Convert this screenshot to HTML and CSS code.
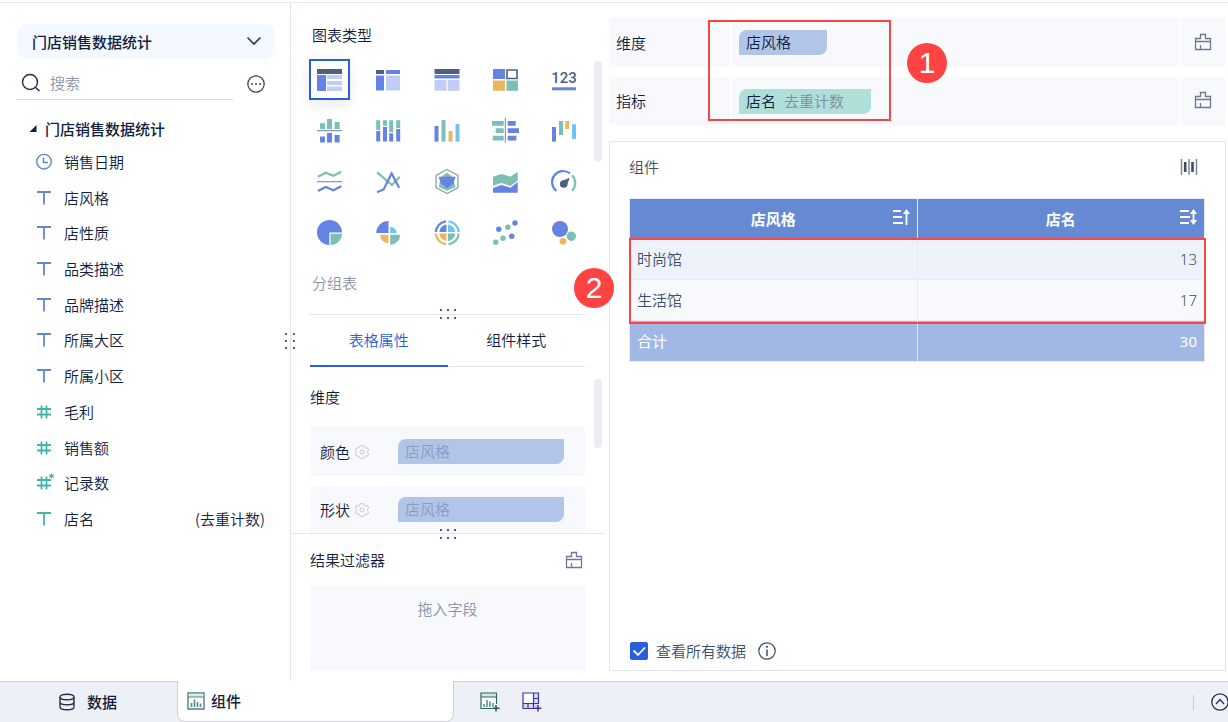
FILE: index.html
```html
<!DOCTYPE html>
<html lang="zh-CN">
<head>
    <meta charset="UTF-8">
    <meta name="viewport" content="width=device-width, initial-scale=1.0">
    <title>门店销售数据统计</title>
    <link rel="stylesheet" href="styles.css">
</head>
<body>
    <!-- shared icons -->
    <svg class="sprite" aria-hidden="true">
        <symbol id="i-text" viewBox="0 0 18 18"><path d="M2 3h14M9 3v12.500" fill="none" stroke="currentColor" stroke-width="1.800"/></symbol>
        <symbol id="i-num" viewBox="0 0 18 18"><path d="M2 6h14M2 11.500h14M6.500 2.500v13M11.500 2.500v13" fill="none" stroke="currentColor" stroke-width="1.800"/></symbol>
        <symbol id="i-clear" viewBox="0 0 18 18"><path d="M1.500 16.500v-11h5v-4h5v4h5v11zM1.500 8.500h15M6.500 16v-4" fill="none" stroke="currentColor" stroke-width="1.300"/></symbol>
        <symbol id="i-gear" viewBox="0 0 14 14"><path d="M5 .8h4l.7 1.700 1.100.6 1.800-.2 1 2-1 1.500v1.200l1 1.500-1 2-1.800-.2-1.100.6L9 13.200H5l-.7-1.700-1.100-.6-1.800.2-1-2 1-1.500V6.400l-1-1.500 1-2 1.800.2 1.100-.6z" fill="none" stroke="currentColor"/><circle cx="7" cy="7" r="2" fill="none" stroke="currentColor"/></symbol>
    </svg>

    <main class="main">
        <aside class="sidebar">
            <div class="dataset">
                <select aria-label="数据集">
                    <option>门店销售数据统计</option>
                </select>
                <svg width="16" height="16" viewBox="0 0 16 16"><path d="M1.500 4.500L8 11l6.500-6.500" fill="none" stroke="#2c3b59" stroke-width="1.600"/></svg>
            </div>
            <div class="search-row">
                <label class="search">
                    <svg width="20" height="20" viewBox="0 0 20 20"><circle cx="9" cy="9" r="7.500" fill="none" stroke="#1d2c4c" stroke-width="1.400"/><path d="M14.500 14.500l4 3.500" stroke="#1d2c4c" stroke-width="1.600"/></svg>
                    <input type="text" placeholder="搜索" aria-label="搜索">
                </label>
                <button class="icon-btn" aria-label="更多">
                    <svg width="18" height="18" viewBox="0 0 18 18"><circle cx="9" cy="9" r="8.200" fill="none" stroke="#34435f" stroke-width="1.200"/><g fill="#34435f"><circle cx="5" cy="9" r="1"/><circle cx="9" cy="9" r="1"/><circle cx="13" cy="9" r="1"/></g></svg>
                </button>
            </div>
            <div class="tree-head">
                <svg width="8" height="8" viewBox="0 0 8 8"><path d="M7.500 0v7H.5z" fill="#122040"/></svg>
                <span>门店销售数据统计</span>
            </div>
            <ul class="fields">
                <li class="dim"><svg class="fi" viewBox="0 0 18 18"><circle cx="9" cy="8.700" r="7.300" fill="none" stroke="currentColor" stroke-width="1.400"/><path d="M8.500 4.500V9.500H13" fill="none" stroke="currentColor" stroke-width="1.500"/></svg>销售日期</li>
                <li class="dim"><svg class="fi"><use href="#i-text"/></svg>店风格</li>
                <li class="dim"><svg class="fi"><use href="#i-text"/></svg>店性质</li>
                <li class="dim"><svg class="fi"><use href="#i-text"/></svg>品类描述</li>
                <li class="dim"><svg class="fi"><use href="#i-text"/></svg>品牌描述</li>
                <li class="dim"><svg class="fi"><use href="#i-text"/></svg>所属大区</li>
                <li class="dim"><svg class="fi"><use href="#i-text"/></svg>所属小区</li>
                <li class="mea"><svg class="fi"><use href="#i-num"/></svg>毛利</li>
                <li class="mea"><svg class="fi"><use href="#i-num"/></svg>销售额</li>
                <li class="mea"><svg class="fi"><use href="#i-num" width="18" height="18"/><path d="M16.500 -.5v5M14.300.7l4.400 2.600M18.700.7l-4.400 2.600" stroke="currentColor" stroke-width="1.300"/></svg>记录数</li>
                <li class="mea"><svg class="fi"><use href="#i-text"/></svg>店名<span class="calc">(去重计数)</span></li>
            </ul>
            <svg class="grip grip-side" width="12" height="18" viewBox="0 0 12 18" fill="#1d2c4c"><circle cx="2" cy="2" r="1"/><circle cx="10" cy="2" r="1"/><circle cx="2" cy="9" r="1"/><circle cx="10" cy="9" r="1"/><circle cx="2" cy="16" r="1"/><circle cx="10" cy="16" r="1"/></svg>
        </aside>

        <section class="config">
            <div class="chart-types">
                <h2>图表类型</h2>
                <div class="type-grid">
                    <button class="on" aria-label="分组表"><svg viewBox="0 0 27 27"><path class="k" d="M1 3h25v5H1z"/><path class="b" d="M1 9h9v16H1z"/><path class="l" d="M11 9h15v4H11zM11 15h15v4H11zM11 20.500h15V25H11z"/></svg></button>
                    <button aria-label="交叉表"><svg viewBox="0 0 27 27"><path class="k" d="M1 4h8v4H1z"/><path class="b" d="M11 4h14v4H11zM1 9.500h8v15H1z"/><path class="l" d="M11 9.500h14v15H11z"/></svg></button>
                    <button aria-label="明细表"><svg viewBox="0 0 27 27"><path class="k" d="M.5 3h25v5H.5z"/><path class="b" d="M.5 9h25v3.500H.5z"/><path class="l" d="M.5 14h12v10.700H.5zM13.700 14h11.800v10.700H13.700z"/></svg></button>
                    <button aria-label="颜色表格"><svg viewBox="0 0 27 27"><path class="b" d="M1 3h12v10H1z"/><path d="M15 4h10v8.500H15z" fill="#fff" stroke="#4e5f82" stroke-width="1.600"/><path class="o" d="M1 14.500h12v10.300H1z"/><path class="t" d="M14.500 14.500h11.500v10.300H14.500z"/></svg></button>
                    <button aria-label="KPI 指标卡"><svg viewBox="0 0 27 27"><text x="13" y="17" text-anchor="middle">123</text><path class="b" d="M1 21.300h24v3H1z"/></svg></button>

                    <button aria-label="对比柱状图"><svg viewBox="0 0 27 27"><path class="t" d="M4 6.300h5V12H4zM11 2h5v10h-5zM18.600 5h5v7h-5z"/><path class="g" d="M1 13h25v1.300H1z"/><path class="b" d="M4 19.600h5v6H4zM11 16h5v9.600h-5zM18.600 18h5v7.600h-5z"/></svg></button>
                    <button aria-label="堆积柱状图"><svg viewBox="0 0 27 27"><path class="t" d="M1.200 3.300h4V13h-4zM8 3.300h4v5.400H8zM14.200 3.300h4V15h-4zM21.200 3.300h4V11h-4z"/><path class="b" d="M1.200 14h4v10.600h-4zM8 10h4v14.600H8zM14.200 16.300h4v8.300h-4zM21.200 12h4v12.600h-4z"/></svg></button>
                    <button aria-label="分区柱状图"><svg viewBox="0 0 27 27"><path class="b" d="M.5 9h4v15.600h-4z"/><path class="t" d="M7.500 3h4v21.600h-4z"/><path class="o" d="M14.500 14h4v10.600h-4z"/><path class="s" d="M21.500 7h4v17.600h-4z"/></svg></button>
                    <button aria-label="对比条形图"><svg viewBox="0 0 27 27"><path class="t" d="M0 4h11.700v4.700H0zM3.700 11.300h8V16h-8zM.8 18.700h10.900v4.700H.8z"/><path class="g" d="M12.800 1H14v24.600h-1.200z"/><path class="b" d="M15.700 4h8v4.700h-8zM15.700 11.300H27V16H15.700zM15.700 18.700h8.700v4.700h-8.700z"/></svg></button>
                    <button aria-label="瀑布图"><svg viewBox="0 0 27 27"><path class="b" d="M1 10h4v14.600H1z"/><path class="t" d="M8 4h4v14H8z"/><path class="o" d="M14.300 4H18v8h-3.700z"/><path class="s" d="M21 7.300h4V22h-4z"/></svg></button>

                    <button aria-label="对比折线图"><svg viewBox="0 0 27 27"><path class="ln" stroke="#7bbfb5" d="M2 8.700l7.700-4 7.600 3 8-4"/><path class="g" d="M1 13h25v1.300H1z"/><path class="ln" stroke="#6483e3" d="M2 23l7.700-4 7.600 3.300 8-4"/></svg></button>
                    <button aria-label="折线图"><svg viewBox="0 0 27 27"><path class="ln" stroke="#7bbfb5" d="M2.200 4.300L17 17l7.600-8.300"/><path class="ln" stroke="#6483e3" d="M2 24.300l6.600-2.800 8-16 7.600 14.200"/></svg></button>
                    <button aria-label="雷达图"><svg viewBox="0 0 27 27"><path d="M13 1.500l11 6v12l-11 6-11-6v-12z" fill="none" stroke="#929db1" stroke-width="1.300"/><path class="t" d="M13 4.500l5.500 4.500 3 10-8.500 3.700L4.800 19 7 9z"/><path class="b" d="M4.500 8.700h17l-2 6.500-6.500 5-6-5z"/></svg></button>
                    <button aria-label="面积图"><svg viewBox="0 0 27 27"><path class="t" d="M1 8.700L9.400 6l9 2.700 7.300-5v9L18.400 18l-9-3L1 17.700z"/><path class="b" d="M1 20l8.400-3 9 2.700 7.300-5.700v10.700H1z"/></svg></button>
                    <button aria-label="仪表盘"><svg viewBox="0 0 27 27"><path d="M5.300 22.800A11 11 0 0 1 19 5.400" fill="none" stroke="#6483e3" stroke-width="2.200"/><path d="M21 7.200a11 11 0 0 1 0 15.600" fill="none" stroke="#7bbfb5" stroke-width="2.200"/><circle class="k" cx="12.700" cy="16" r="3.800"/><path class="k" d="M10.500 13.200l8.300-3.500-3.200 8.300z"/></svg></button>

                    <button aria-label="饼图"><svg viewBox="0 0 27 27"><path class="b" d="M13.300 13.500V26A12.500 12.500 0 1 1 26 13.500z"/><path class="t" d="M14.500 14.700H26A11.500 11.500 0 0 1 14.500 26z"/></svg></button>
                    <button aria-label="玫瑰图"><svg viewBox="0 0 27 27"><path class="b" d="M1.300 14A12 12 0 0 1 13.500 2v12z"/><path class="s" d="M15.200 14V7.700a6.300 6.300 0 0 1 6.400 6.300z"/><path class="o" d="M5 15.700h8.500v8.500A8.500 8.500 0 0 1 5 15.700z"/><path class="t" d="M15.200 15.700h10a10 10 0 0 1-10 10z"/></svg></button>
                    <button aria-label="多层饼图"><svg viewBox="0 0 27 27"><path class="b" d="M12.500 13H5.300a8 8 0 0 1 7.200-7.500z"/><path class="s" d="M14 13V5.500a8 8 0 0 1 7.300 7.500z"/><path class="o" d="M5.300 14.500h7.200V22a8 8 0 0 1-7.200-7.500z"/><path class="t" d="M14 14.500h7.300A8 8 0 0 1 14 22z"/><g fill="none" stroke-width="2.200"><path stroke="#6483e3" d="M1.800 13A11.500 11.500 0 0 1 12 2.300"/><path stroke="#6fc5ef" d="M14.500 2.300A11.500 11.500 0 0 1 24.700 13"/><path stroke="#edb55f" d="M1.800 14.500A11.500 11.500 0 0 0 12 25.200"/><path stroke="#7bbfb5" d="M24.700 14.500a11.500 11.500 0 0 1-10.200 10.700"/></g></svg></button>
                    <button aria-label="散点图"><svg viewBox="0 0 27 27"><g class="b"><circle cx="6.800" cy="10.300" r="2.700"/><circle cx="23" cy="4" r="2.700"/><circle cx="19.800" cy="17.300" r="2.700"/></g><g class="t"><circle cx="15.800" cy="8.300" r="2.700"/><circle cx="3.800" cy="23.300" r="2.700"/><circle cx="11" cy="19.300" r="2.700"/></g></svg></button>
                    <button aria-label="聚合气泡图"><svg viewBox="0 0 27 27"><circle class="b" cx="9" cy="10" r="8"/><circle class="t" cx="20.300" cy="17.300" r="4.700"/><circle class="o" cx="12" cy="22.300" r="3.400"/></svg></button>
                </div>
                <p class="type-name">分组表</p>
                <i class="thumb thumb-types"></i>
            </div>

            <div class="props">
                <svg class="grip grip-row" width="18" height="12" viewBox="0 0 18 12" fill="#1d2c4c"><circle cx="2" cy="2" r="1"/><circle cx="9" cy="2" r="1"/><circle cx="16" cy="2" r="1"/><circle cx="2" cy="10" r="1"/><circle cx="9" cy="10" r="1"/><circle cx="16" cy="10" r="1"/></svg>
                <div class="tabs">
                    <button class="active">表格属性</button>
                    <button>组件样式</button>
                </div>
                <h3>维度</h3>
                <div class="prop-row">
                    <span>颜色</span>
                    <svg class="gear" width="14" height="14"><use href="#i-gear"/></svg>
                    <div class="chip chip-dim faded">店风格</div>
                </div>
                <div class="prop-row">
                    <span>形状</span>
                    <svg class="gear" width="14" height="14"><use href="#i-gear"/></svg>
                    <div class="chip chip-dim faded">店风格</div>
                </div>
                <i class="thumb thumb-props"></i>
            </div>

            <div class="filter">
                <svg class="grip grip-row" width="18" height="12" viewBox="0 0 18 12" fill="#1d2c4c"><circle cx="2" cy="2" r="1"/><circle cx="9" cy="2" r="1"/><circle cx="16" cy="2" r="1"/><circle cx="2" cy="10" r="1"/><circle cx="9" cy="10" r="1"/><circle cx="16" cy="10" r="1"/></svg>
                <div class="filter-head">
                    <h3>结果过滤器</h3>
                    <button class="icon-btn" aria-label="清空过滤器"><svg width="18" height="18"><use href="#i-clear"/></svg></button>
                </div>
                <div class="drop">拖入字段</div>
            </div>
        </section>

        <section class="workspace">
            <div class="shelves">
                <div class="shelf">
                    <span class="shelf-name">维度</span>
                    <div class="shelf-body"><div class="chip chip-dim dim-item">店风格</div></div>
                    <button class="shelf-clear" aria-label="清空维度"><svg width="18" height="18"><use href="#i-clear"/></svg></button>
                </div>
                <div class="shelf">
                    <span class="shelf-name">指标</span>
                    <div class="shelf-body"><div class="chip chip-mea">店名<span>去重计数</span></div></div>
                    <button class="shelf-clear" aria-label="清空指标"><svg width="18" height="18"><use href="#i-clear"/></svg></button>
                </div>
                <div class="mark mark-shelves"></div>
                <b class="badge badge-one">1</b>
            </div>

            <div class="card">
                <div class="card-head">
                    <h2>组件</h2>
                    <button class="icon-btn" aria-label="列宽"><svg width="18" height="18" viewBox="0 0 18 18"><path d="M1.500 1v16M9 1v16M16.500 1v16" stroke="#7d899e" stroke-width="1.500"/><path d="M5.200 4v10M12.500 4v10" stroke="#3d4d66" stroke-width="2.600"/></svg></button>
                </div>
                <div class="table-wrap">
                    <table>
                        <thead>
                            <tr>
                                <th>店风格<button class="sort" aria-label="升序"><svg width="18" height="18" viewBox="0 0 18 18"><path d="M1 3h8M1 9h9M1 15h10M14.500 17V4" stroke="#fff" stroke-width="1.800" fill="none"/><path d="M14.500 1l3.500 5h-7z" fill="#fff"/></svg></button></th>
                                <th>店名<button class="sort" aria-label="排序"><svg width="18" height="18" viewBox="0 0 18 18"><path d="M1 3h9M1 9h10M1 15h9M14.500 4v10" stroke="#fff" stroke-width="1.800" fill="none"/><path d="M14.500 1l3.500 5h-7zM14.500 17l3.500-5h-7z" fill="#fff"/></svg></button></th>
                            </tr>
                        </thead>
                        <tbody>
                            <tr><td>时尚馆</td><td class="num">13</td></tr>
                            <tr><td>生活馆</td><td class="num">17</td></tr>
                        </tbody>
                        <tfoot>
                            <tr><td>合计</td><td class="num">30</td></tr>
                        </tfoot>
                    </table>
                    <div class="mark mark-rows"></div>
                    <b class="badge badge-two">2</b>
                </div>
                <div class="card-foot">
                    <span class="check">
                        <input type="checkbox" id="all-data" checked>
                        <svg width="18" height="18" viewBox="0 0 18 18"><path d="M3.500 8.500l4.500 4.500 7-7.500" fill="none" stroke="#fff" stroke-width="1.800"/></svg>
                    </span>
                    <label for="all-data">查看所有数据</label>
                    <svg width="18" height="18" viewBox="0 0 18 18"><circle cx="9" cy="9" r="8.200" fill="none" stroke="#3d4d66" stroke-width="1.200"/><path d="M9 7.500V14" stroke="#3d4d66" stroke-width="1.500"/><circle cx="9" cy="4.800" r="1.100" fill="#3d4d66"/></svg>
                </div>
            </div>
        </section>
    </main>

    <footer class="bottom">
        <button class="page-tab data-tab">
            <svg width="18" height="18" viewBox="0 0 18 18" fill="none" stroke="#26324c" stroke-width="1.400"><ellipse cx="9" cy="4" rx="7" ry="2.800"/><path d="M2 4v10c0 1.600 3 2.800 7 2.800s7-1.200 7-2.800V4M2 9c0 1.600 3 2.800 7 2.800S16 10.600 16 9"/></svg>
            数据
        </button>
        <button class="page-tab current">
            <svg width="18" height="18" viewBox="0 0 18 18"><path d="M1 1h16v16H1z" fill="#fff" stroke="#54817d" stroke-width="1.400"/><path d="M1.700 1.700h14.600v3H1.700z" fill="#d5ebe7"/><path d="M1 5h16" stroke="#54817d"/><path d="M4.500 15v-4M7.500 15V7.500M10.500 15v-5M13.500 15v-3.500" stroke="#4c8f88" stroke-width="1.600"/></svg>
            组件
        </button>
        <button class="icon-btn add-chart" aria-label="添加组件"><svg width="20" height="20" viewBox="0 0 20 20"><path d="M1 1h16v16H1z" fill="#fff"/><path d="M1 1h16v4H1z" fill="#cfe7e3"/><path d="M16.500 12V1H1v15.500h12M1 5h16" fill="none" stroke="#2f6963" stroke-width="1.200"/><path d="M4 15v-3M7 15V8M10 15V9.500M13 15v-4" stroke="#4c8f88" stroke-width="1.500"/><path d="M16 13v6.500M13 16.200h6.500" stroke="#1f534e" stroke-width="1.500"/></svg></button>
        <button class="icon-btn add-board" aria-label="添加仪表板"><svg width="20" height="20" viewBox="0 0 20 20"><path d="M1 1h16v16H1z" fill="#dcd6f5"/><path d="M1 1h10v10H1z" fill="#fff"/><path d="M16.500 12V1H1v15.500h12M11.500 1v10.500M1 11.500h15.500M6 11.500v5M11.500 6.500h5M11.500 11.500v5" fill="none" stroke="#4134a3" stroke-width="1.200"/><path d="M16 13v6.500M13 16.200h6.500" stroke="#4134a3" stroke-width="1.500"/></svg></button>
        <span class="divider"></span>
        <button class="icon-btn collapse" aria-label="收起"><svg width="18" height="18" viewBox="0 0 18 18" fill="none" stroke="#26324c" stroke-width="1.300"><circle cx="9" cy="9" r="8.200"/><path d="M5 11l4-4.500 4 4.500"/></svg></button>
    </footer>
</body>
</html>
```
FILE: styles.css
```css
* {
    box-sizing: border-box;
}
body {
    margin: 0;
    height: 100vh;
    display: flex;
    flex-direction: column;
    overflow: hidden;
    padding-top: 2px;
    background: #fff;
    color: #122040;
    font: 15px/20px "Noto Sans CJK SC", "Noto Sans", sans-serif;
    font-weight: 350;
}
h2, h3, p, ul {
    margin: 0;
    padding: 0;
    font-size: 15px;
    font-weight: 350;
}
button, input, select {
    font: inherit;
    color: inherit;
}
button {
    padding: 0;
    border: 0;
    background: none;
    cursor: pointer;
}
svg {
    display: block;
    flex: none;
}
.sprite {
    position: absolute;
    width: 0;
    height: 0;
}
.main {
    flex: 1;
    min-height: 0;
    display: flex;
    border-top: 1px solid #e6e8f2;
}
.icon-btn {
    color: #6c7a92;
}

/* left: field list */
.sidebar {
    position: relative;
    flex: none;
    width: 291px;
    padding: 21px 15px 0 16px;
    border-right: 1px solid #e3e6f0;
}
.dataset {
    position: relative;
    margin-left: 1px;
}
.dataset select {
    display: block;
    width: 100%;
    height: 35px;
    padding: 0 40px 0 15px;
    border: 0;
    border-radius: 10px;
    background: #f3f9fe;
    font-weight: 500;
    appearance: none;
}
.dataset svg {
    position: absolute;
    right: 13px;
    top: 9px;
    pointer-events: none;
}
.search-row {
    display: flex;
    align-items: center;
    justify-content: space-between;
    margin-top: 8px;
    padding-right: 10px;
}
.search {
    display: flex;
    align-items: center;
    gap: 7px;
    width: 217px;
    height: 33px;
    padding-left: 5px;
    border-bottom: 1px solid #d5d8e0;
}
.search input {
    width: 100%;
    min-width: 0;
    border: 0;
    outline: 0;
    background: none;
}
.search input::placeholder {
    color: #8b95a8;
}
.tree-head {
    display: flex;
    align-items: center;
    gap: 8px;
    height: 30px;
    margin-top: 14px;
    padding-left: 13px;
    font-weight: 500;
}
.fields {
    display: grid;
    grid-auto-rows: 1fr;
    height: 393px;
    padding: 0 10px 0 19px;
    list-style: none;
}
.fields li {
    display: flex;
    align-items: center;
}
.fi {
    width: 18px;
    height: 18px;
    margin-right: 11px;
    overflow: visible;
}
.dim .fi {
    color: #6288d1;
}
.mea .fi {
    color: #43b5a7;
}
.calc {
    margin-left: auto;
}
.grip {
    position: absolute;
    z-index: 2;
}
.grip-side {
    right: -6px;
    top: 329px;
}
.grip-row {
    left: 50%;
    top: -6px;
    margin-left: -9px;
}

/* middle: chart type, attributes, filter */
.config {
    flex: none;
    display: flex;
    flex-direction: column;
    width: 313px;
}
.chart-types {
    position: relative;
    height: 311px;
    padding: 22px 19px 0 18px;
}
.chart-types h2,
.type-name {
    padding-left: 3px;
}
.type-grid {
    display: grid;
    grid-template-columns: repeat(5, 41px);
    justify-content: space-between;
    row-gap: 10px;
    margin: 14px 0 20px;
}
.type-grid button {
    display: grid;
    place-items: center;
    height: 41px;
}
.type-grid .on {
    border: 2px solid #2a5fdc;
    box-shadow: 0 4px 14px rgba(20, 40, 90, 0.1);
}
.type-grid svg {
    width: 27px;
    height: 27px;
    overflow: visible;
}
.type-grid text {
    font: 500 15px Roboto, sans-serif;
    fill: #4e5f82;
}
.k { fill: #4e5f82; }
.b { fill: #6483e3; }
.l { fill: #c0cdf6; }
.t { fill: #7bbfb5; }
.o { fill: #edb55f; }
.s { fill: #6fc5ef; }
.g { fill: #929db1; }
.ln {
    fill: none;
    stroke-width: 2.2px;
}
.type-name {
    color: #8b95a8;
}
.thumb {
    position: absolute;
    right: 2px;
    width: 8px;
    border-radius: 4px;
    background: #ecedf2;
}
.thumb-types {
    top: 58px;
    height: 101px;
}
.thumb-props {
    top: 65px;
    height: 69px;
}
.props {
    position: relative;
    flex: 1;
    min-height: 0;
    padding: 0 19px;
    display: flex;
    flex-direction: column;
}
.tabs {
    display: flex;
    flex: none;
    height: 53px;
    border-top: 1px solid #e3e6f0;
    border-bottom: 1px solid #e3e6f0;
}
.tabs button {
    flex: 1;
    height: 52px;
    border-bottom: 2px solid transparent;
}
.tabs .active {
    color: #2a5fdc;
    border-bottom-color: #2a5fdc;
}
.props h3 {
    margin: 20px 0;
}
.prop-row {
    display: flex;
    flex: none;
    align-items: center;
    height: 49px;
    margin-bottom: 10px;
    padding: 0 21px 0 10px;
    background: #f8f9fd;
}
.prop-row:last-of-type {
    flex: 0 1 49px;
    height: auto;
    align-items: flex-start;
    margin-bottom: 0;
    min-height: 0;
    padding-top: 11px;
    line-height: 25px;
}
.gear {
    margin-left: 5px;
    color: #c3c9d3;
}
.prop-row:last-of-type .gear {
    margin-top: 6px;
}
.prop-row .chip {
    width: 166px;
    margin-left: auto;
}
.chip {
    height: 25px;
    padding: 0 7px;
    border-radius: 8px 0 8px 0;
    line-height: 24px;
    white-space: nowrap;
}
.chip-dim {
    background: #b1c5e8;
}
.chip-mea {
    width: 132px;
    background: #aedfd9;
}
.chip-mea span {
    margin-left: 8px;
    color: #808ca0;
}
.dim-item {
    width: 88px;
}
.faded {
    color: #889dc2;
}
.filter {
    position: relative;
    flex: none;
    height: 148px;
    padding: 0 19px 10px;
    border-top: 1px solid #e3e6f0;
    display: flex;
    flex-direction: column;
}
.filter-head {
    display: flex;
    align-items: center;
    justify-content: space-between;
    height: 51px;
    padding-right: 2px;
}
.drop {
    flex: 1;
    padding-top: 14px;
    background: #f8f9fd;
    color: #8b95a8;
    text-align: center;
}

/* right: shelves and preview */
.workspace {
    flex: 1;
    min-width: 0;
    display: flex;
    flex-direction: column;
    gap: 16px;
    padding: 15px 2px 10px 5px;
}
.shelves {
    position: relative;
    display: grid;
    gap: 10px;
}
.shelf {
    display: flex;
    height: 49px;
    background: #f8f9fd;
}
.shelf + .shelf {
    height: 48px;
}
.shelf-name {
    width: 121px;
    padding-left: 7px;
    align-self: center;
}
.shelf-body {
    flex: 1;
    display: flex;
    align-items: center;
    padding-left: 7px;
    border-left: 2px solid #fff;
    border-right: 2px solid #fff;
}
.shelf-clear {
    display: grid;
    place-items: center;
    width: 45px;
    padding: 0 2px 2px 0;
    color: #6c7a92;
}
.mark {
    position: absolute;
    border: 2px solid #f94545;
    pointer-events: none;
}
.mark-shelves {
    left: 99px;
    top: 2px;
    width: 183px;
    height: 101px;
}
.mark-rows {
    left: 0;
    right: -1px;
    top: 40px;
    height: 86px;
}
.badge {
    position: absolute;
    width: 40px;
    height: 40px;
    border-radius: 50%;
    background: #ff4343;
    color: #fff;
    font: 30px/40px "Liberation Sans", sans-serif;
    text-align: center;
}
.badge-one {
    left: 298px;
    top: 25px;
}
.badge-two {
    left: -55px;
    top: 70px;
}
.card {
    flex: 1;
    display: flex;
    flex-direction: column;
    padding: 0 20px 0 19px;
    border: 1px solid #e3e6f0;
    color: #3d4d66;
}
.card-head {
    display: flex;
    align-items: center;
    justify-content: space-between;
    height: 49px;
    margin-bottom: 7px;
    padding-right: 7px;
}
.table-wrap {
    position: relative;
}
table {
    width: 100%;
    table-layout: fixed;
    border-collapse: collapse;
}
th, td {
    position: relative;
    height: 41px;
    padding: 0 7px;
    border: 1px solid #e6ebf7;
    text-align: left;
}
th {
    height: 40px;
    background: #6589d3;
    color: #fff;
    font-weight: 700;
    text-align: center;
}
.sort {
    position: absolute;
    right: 7px;
    top: 9px;
}
td.num {
    font-family: "Noto Sans", sans-serif;
    text-align: right;
}
tbody td {
    background: #f8f9fd;
}
tbody tr:first-child td {
    background: #eef3fb;
}
tfoot td {
    background: #a1b7e4;
    color: #fff;
    font-weight: 400;
}
.card-foot {
    display: flex;
    align-items: center;
    margin-top: auto;
    height: 38px;
}
.check {
    position: relative;
    margin: 0 8px 0 1px;
}
.check input {
    display: block;
    width: 18px;
    height: 18px;
    margin: 0;
    border: 1px solid #2a5fdc;
    border-radius: 2px;
    appearance: none;
}
.check input:checked {
    background: #2a5fdc;
}
.check svg {
    position: absolute;
    left: 0;
    top: 0;
    pointer-events: none;
}
.card-foot label {
    margin-right: 12px;
}

/* page tabs */
.bottom {
    flex: none;
    display: flex;
    align-items: center;
    height: 41px;
    border-top: 1px solid #cdd0db;
    background: #edf0f6;
}
.page-tab {
    display: flex;
    align-items: center;
    font-weight: 500;
}
.data-tab {
    width: 177px;
    gap: 11px;
    padding-left: 58px;
}
.current {
    width: 277px;
    height: 41px;
    margin-top: -1px;
    gap: 6px;
    padding-left: 9px;
    border: 1px solid #cdd0db;
    border-top: 0;
    border-radius: 0 0 8px 8px;
    background: #fff;
}
.add-chart {
    margin-left: 26px;
}
.add-board {
    margin-left: 22px;
}
.divider {
    width: 1px;
    height: 15px;
    margin-left: auto;
    background: #c3c8d4;
}
.collapse {
    margin: 0 -1px 0 17px;
}
```
